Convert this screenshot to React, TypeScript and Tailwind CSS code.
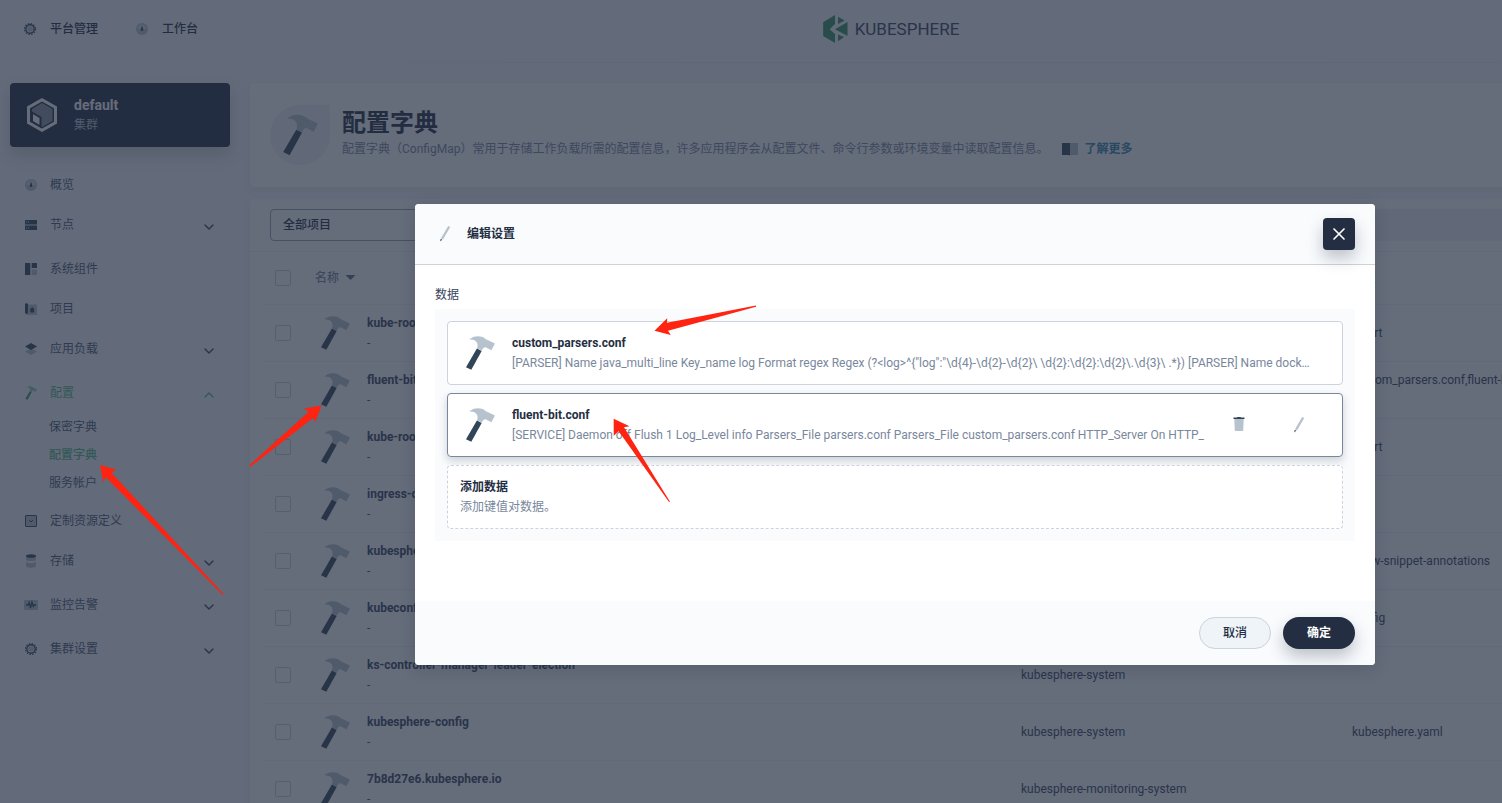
import type { ReactNode } from 'react'
import { ChevronDown, ChevronUp, X } from 'lucide-react'
import { clsx } from 'clsx'

interface NavItem {
  label: string
  icon: ReactNode
  expandable?: boolean
  active?: boolean
  children?: { label: string; active?: boolean }[]
}

interface ConfigMapRow {
  name: string
  project: string
  fields: string
  tall?: boolean
}

const NAV_ITEMS: NavItem[] = [
  { label: '概览', icon: <GaugeIcon /> },
  { label: '节点', icon: <NodesIcon />, expandable: true },
  { label: '系统组件', icon: <ComponentsIcon /> },
  { label: '项目', icon: <ProjectIcon /> },
  { label: '应用负载', icon: <LayersIcon />, expandable: true },
  {
    label: '配置',
    icon: <HammerIcon className="h-4 w-4" head="#8fd0b1" handle="#369a6a" />,
    expandable: true,
    active: true,
    children: [
      { label: '保密字典' },
      { label: '配置字典', active: true },
      { label: '服务帐户' },
    ],
  },
  { label: '定制资源定义', icon: <CrdIcon /> },
  { label: '存储', icon: <StorageIcon />, expandable: true },
  { label: '监控告警', icon: <MonitorIcon />, expandable: true },
  { label: '集群设置', icon: <GearIcon />, expandable: true },
]

const ROWS: ConfigMapRow[] = [
  { name: 'kube-root-ca.crt', project: 'kubesphere-logging', fields: 'ca.crt' },
  {
    name: 'fluent-bit',
    project: 'kubesphere-logging',
    fields: 'custom_parsers.conf,fluent-bit.conf',
    tall: true,
  },
  { name: 'kube-root-ca.crt', project: 'kubesphere-system', fields: 'ca.crt' },
  { name: 'ingress-controller', project: 'kubesphere-system', fields: '' },
  { name: 'kubesphere-router', project: 'kubesphere-system', fields: 'allow-snippet-annotations' },
  { name: 'kubeconfig-admin', project: 'kubesphere-system', fields: 'config' },
  { name: 'ks-controller-manager-leader-election', project: 'kubesphere-system', fields: '' },
  { name: 'kubesphere-config', project: 'kubesphere-system', fields: 'kubesphere.yaml' },
  { name: '7b8d27e6.kubesphere.io', project: 'kubesphere-monitoring-system', fields: '' },
]

const ENTRIES = [
  {
    key: 'custom_parsers.conf',
    value:
      '[PARSER] Name java_multi_line Key_name log Format regex Regex (?<log>^{"log":"\\d{4}-\\d{2}-\\d{2}\\ \\d{2}:\\d{2}:\\d{2}\\.\\d{3}\\ .*}) [PARSER] Name dock…',
  },
  {
    key: 'fluent-bit.conf',
    value:
      '[SERVICE] Daemon off Flush 1 Log_Level info Parsers_File parsers.conf Parsers_File custom_parsers.conf HTTP_Server On HTTP_',
    selected: true,
  },
]

export default function App() {
  return (
    <div className="relative h-screen overflow-hidden bg-[#f7f8fb] font-[Roboto,'Noto_Sans_CJK_SC',sans-serif] text-xs text-[#242e42]">
      {/* Console is laid out for wide screens, narrower windows cut the right side */}
      <div className="relative h-full min-w-[1790px] overflow-hidden">
        <TopBar />
        <div className="flex">
          <Sidebar />
          <main className="min-w-0 flex-1 space-y-3 pt-5 pr-5">
            <PageBanner />
            <ConfigMapTable />
          </main>
        </div>

        <div className="absolute inset-0 flex items-start justify-center bg-[#232d41]/70 pt-[204px]">
          <EditDialog />
        </div>
        <Annotations />
      </div>
    </div>
  )
}

function TopBar() {
  return (
    <header className="flex h-[63px] flex-col justify-between">
      <div className="grid h-[58px] grid-cols-[1fr_auto_1fr] items-center pr-2">
        <nav className="flex items-center gap-9 pl-[22px] font-medium">
          <a href="#platform" className="flex items-center gap-3">
            <GearIcon />
            平台管理
          </a>
          <a href="#workbench" className="flex items-center gap-3">
            <GaugeIcon />
            工作台
          </a>
        </nav>
        <div className="flex items-center gap-[7px]">
          <svg viewBox="0 0 75 85" className="h-7 w-[25px]" fill="#329361">
            <path d="M36 0V27L20 43L36 58V85L0 64V22Z" />
            <path d="M45 5L65 17L45 27Z" />
            <path d="M74 21V64L36 43Z" />
            <path d="M45 59L64 67L45 80Z" />
          </svg>
          <span className="text-[17px] leading-7 text-[#36435c]">KUBESPHERE</span>
        </div>
      </div>
      <div className="ml-[220px] h-px bg-gradient-to-r from-[#f7f8fb] via-[#e3e9ef] to-[#f7f8fb]" />
    </header>
  )
}

function Sidebar() {
  return (
    <aside className="w-[250px] shrink-0 px-[10px] pt-5">
      <div className="mr-[10px] flex h-16 items-center gap-4 rounded bg-[#242e42] pl-4 text-white shadow-[0_8px_16px_rgba(36,46,66,0.2)]">
        <ClusterIcon />
        <div className="leading-5">
          <p className="text-sm leading-5 font-bold">default</p>
          <p className="text-[#b6c2cd]">集群</p>
        </div>
      </div>

      <ul className="mt-[18px] text-[#4a5974]">
        {NAV_ITEMS.map((item) => (
          <li
            key={item.label}
            className={clsx(item.expandable && !item.children && 'pb-1', item.active && 'text-[#55bc8a]')}
          >
            <a href="#nav" className="flex h-10 items-center gap-[11px] pr-[23px] pl-[13px]">
              {item.icon}
              <span className="flex-1">{item.label}</span>
              {item.expandable &&
                (item.active ? (
                  <ChevronUp className="mt-1 h-4 w-4" strokeWidth={2} />
                ) : (
                  <ChevronDown className="mt-1 h-4 w-4 text-[#36435c]" strokeWidth={2} />
                ))}
            </a>
            {item.children && (
              <ul className="pb-1">
                {item.children.map((child) => (
                  <li key={child.label}>
                    <a
                      href="#nav"
                      className={clsx(
                        'flex h-7 items-center pl-[39px]',
                        child.active ? 'font-medium text-[#55bc8a]' : 'text-[#4a5974]',
                      )}
                    >
                      {child.label}
                    </a>
                  </li>
                ))}
              </ul>
            )}
          </li>
        ))}
      </ul>
    </aside>
  )
}

function PageBanner() {
  return (
    <section className="flex h-[104px] items-start gap-3 rounded bg-white px-5 pt-[22px] shadow-[0_4px_8px_rgba(36,46,66,0.06)]">
      <div className="flex h-15 w-15 items-center justify-center rounded-full rounded-tr-none bg-[#f0f2f8]">
        <HammerIcon className="h-12 w-12" />
      </div>
      <div>
        <h1 className="text-2xl leading-9 font-bold">配置字典</h1>
        <p className="flex items-center leading-4 text-[#79879c]">
          配置字典（ConfigMap）常用于存储工作负载所需的配置信息，许多应用程序会从配置文件、命令行参数或环境变量中读取配置信息。
          <a href="#docs" className="ml-3 flex items-center gap-1 font-bold text-[#3385b0]">
            <BookIcon />
            了解更多
          </a>
        </p>
      </div>
    </section>
  )
}

function Checkbox({ label }: { label: string }) {
  return (
    <input
      type="checkbox"
      aria-label={label}
      className="block h-4 w-4 appearance-none rounded-xs border border-[#ccd3db]"
    />
  )
}

function ConfigMapTable() {
  return (
    <section className="rounded bg-white shadow-[0_4px_8px_rgba(36,46,66,0.06)]">
      <div className="flex gap-3 border-b border-[#f0f2f8] px-5 py-[10px]">
        <select
          aria-label="项目"
          className="h-8 w-[200px] appearance-none rounded border border-[#98a3b4] bg-white px-3 font-medium"
        >
          <option>全部项目</option>
        </select>
        <input
          type="search"
          aria-label="搜索"
          className="h-8 flex-1 rounded bg-[#f0f2f8] px-3 outline-none"
        />
      </div>
      <div className="px-3">
        <table className="w-full table-fixed text-left">
          <thead>
            <tr className="h-[52px] border-b border-[#f0f2f8] text-[#79879c]">
              <th className="w-[41px] pl-[13px]">
                <Checkbox label="全选" />
              </th>
              <th className="w-[706px] pl-3 font-medium">
                <span className="flex items-center gap-[6px]">
                  名称
                  <svg viewBox="0 0 12 6" className="h-[5px] w-[11px]" fill="#5f708a">
                    <path d="M0 0H12L6 6Z" />
                  </svg>
                </span>
              </th>
              <th className="w-[331px] pl-3 font-medium">项目</th>
              <th className="pl-3 font-medium">配置</th>
            </tr>
          </thead>
          <tbody>
            {ROWS.map((row, i) => (
              <tr key={i} className="h-[57px] border-b border-[#f0f2f8]">
                <td className="pl-[13px]">
                  <Checkbox label={row.name} />
                </td>
                <td className="pl-3">
                  <div className="flex items-center gap-3">
                    <HammerIcon className="h-10 w-10" />
                    <div className="leading-5">
                      <a href="#configmap" className="block font-bold text-[#36435c]">
                        {row.name}
                      </a>
                      <p className="text-[#4a5974]">-</p>
                    </div>
                  </div>
                </td>
                <td className="pl-3 text-[#36435c]">{row.project}</td>
                <td className={clsx('pl-3 whitespace-nowrap text-[#36435c]', row.tall && 'pb-5')}>
                  {row.fields}
                </td>
              </tr>
            ))}
          </tbody>
        </table>
      </div>
    </section>
  )
}

function EditDialog() {
  return (
    <div
      role="dialog"
      aria-labelledby="edit-title"
      className="w-[960px] overflow-hidden rounded bg-white shadow-[0_4px_16px_rgba(36,46,66,0.2)]"
    >
      <div className="flex h-[61px] items-center gap-3 border-b border-[#ccd3db] bg-[#f9fbfd] px-5">
        <PencilIcon className="h-5 w-5" />
        <h2 id="edit-title" className="flex-1 font-bold">
          编辑设置
        </h2>
        <button
          aria-label="关闭"
          className="flex h-8 w-8 items-center justify-center rounded bg-[#242e42] text-white shadow-[0_8px_16px_rgba(36,46,66,0.28)]"
        >
          <X className="h-5 w-5" strokeWidth={2} />
        </button>
      </div>

      <div className="px-5 pt-5 pb-15">
        <p className="mb-1 leading-5 text-[#36435c]">数据</p>
        <ul className="space-y-2 bg-[#f9fbfd] p-3">
          {ENTRIES.map((entry) => (
            <li
              key={entry.key}
              className={clsx(
                'flex h-16 items-center gap-3 rounded border bg-white px-3',
                entry.selected
                  ? 'border-[#79879c] shadow-[0_4px_8px_rgba(36,46,66,0.2)]'
                  : 'border-[#ccd3db]',
              )}
            >
              <HammerIcon className="h-10 w-10 shrink-0" />
              <div className="min-w-0 flex-1 leading-5 whitespace-nowrap">
                <p className="font-bold">{entry.key}</p>
                <p className="text-[#79879c]">{entry.value}</p>
              </div>
              {entry.selected && (
                <div className="mr-[21px] flex gap-10">
                  <button aria-label="删除" className="h-5 w-5">
                    <TrashIcon />
                  </button>
                  <button aria-label="编辑" className="h-5 w-5">
                    <PencilIcon className="h-5 w-5" />
                  </button>
                </div>
              )}
            </li>
          ))}
          <li>
            <button className="block h-16 w-full rounded border border-dashed border-[#ccd3db] bg-white px-3 text-left leading-5">
              <span className="block font-bold">添加数据</span>
              <span className="block text-[#79879c]">添加键值对数据。</span>
            </button>
          </li>
        </ul>
      </div>

      <div className="flex justify-end gap-3 bg-[#f9fbfd] px-5 py-4">
        <button className="h-8 w-18 rounded-full border border-[#ccd3db] bg-[#eff4f9] font-medium">
          取消
        </button>
        <button className="h-8 w-18 rounded-full bg-[#242e42] font-bold text-white shadow-[0_8px_16px_rgba(36,46,66,0.28)]">
          确定
        </button>
      </div>
    </div>
  )
}

/* Red pointers drawn over the page */
function Annotations() {
  return (
    <svg
      className="pointer-events-none absolute top-0 left-0 h-[803px] w-[1502px]"
      viewBox="0 0 1502 803"
      fill="#ff2312"
    >
      <path d="M100 465L116.5 469.7L111.5 472.7L223.8 594.3L222.8 595L105.8 477.3L103.3 482Z" />
      <path d="M321.5 405.5L303.3 408.7L309 411.5L249.3 465.3L250 467L313.3 417.8L315.3 422Z" />
      <path d="M654.5 330.7L667.2 318.2L667 322.7L756 305.5V306.7L668 330.8L670.8 335Z" />
      <path d="M613.7 418.8L629.5 426.3L624 427.3L670 501.7L669 502L618.7 431.3L613.7 435.8Z" />
    </svg>
  )
}

function HammerIcon({
  className,
  head = '#b6c2cd',
  handle = '#324558',
}: {
  className?: string
  head?: string
  handle?: string
}) {
  return (
    <svg viewBox="0 0 40 40" className={className}>
      <path
        fill={head}
        d="M9.3 6.6C13 2.5 21 2 25 5.5C26 6.5 27 6.8 28 7.2L34.9 10.4L31.4 17.2L26 14.4C24.5 13.8 23 14.8 21.7 17.6L17 15.3C19 10.5 16 5.6 9.3 6.6Z"
      />
      <path fill={handle} d="M16.9 15.6L21.7 18L11.3 36.8L6 34.2Z" />
    </svg>
  )
}

function PencilIcon({ className }: { className?: string }) {
  return (
    <svg viewBox="0 0 20 20" className={className}>
      <path fill="#b6c2cd" d="M13.2 2L15.2 3L8 15.4L6 14.2Z" />
      <path fill="#324558" d="M5.7 14.8L7.2 15.7L5.2 17.6Z" />
    </svg>
  )
}

function TrashIcon() {
  return (
    <svg viewBox="0 0 20 20" className="h-5 w-5">
      <path fill="#b6c2cd" d="M5.3 4H14.7L14.2 15.4L13.6 16H6.4L5.8 15.4Z" />
      <path fill="#324558" d="M4.5 2.6H8L8.4 2H11.6L12 2.6H15.5V4H4.5Z" />
    </svg>
  )
}

function GearIcon() {
  return (
    <svg viewBox="0 0 16 16" className="h-4 w-4" fill="none" stroke="#324558">
      <circle cx="8" cy="8" r="2.8" fill="#b6c2cd" stroke="none" />
      <circle cx="8" cy="8" r="4.2" strokeWidth="1.4" />
      <circle cx="8" cy="8" r="5.5" strokeWidth="1.2" strokeDasharray="1.4 1.48" />
    </svg>
  )
}

function GaugeIcon() {
  return (
    <svg viewBox="0 0 16 16" className="h-4 w-4">
      <circle cx="8" cy="8" r="6" fill="#b6c2cd" />
      <path d="M3.5 8A4.5 4.5 0 0 1 12.5 8Z" fill="#d5dde4" />
      <path d="M8 4.5L9.2 8.3A1.3 1.3 0 1 1 6.8 8.3Z" fill="#324558" />
    </svg>
  )
}

function NodesIcon() {
  return (
    <svg viewBox="0 0 16 16" className="h-4 w-4">
      <path d="M2 3H14V7.4H2ZM2 8.6H14V13H2Z" fill="#324558" />
      <path d="M3 4.5H4V5.5H3ZM5 4.5H6V5.5H5ZM3 10.5H4V11.5H3ZM5 10.5H6V11.5H5Z" fill="#d5dde4" />
    </svg>
  )
}

function ComponentsIcon() {
  return (
    <svg viewBox="0 0 16 16" className="h-4 w-4">
      <path d="M2 2H7.3V14H2ZM8.7 2H14V7H8.7Z" fill="#324558" />
      <path d="M8.7 8.5H14V14H8.7Z" fill="#b6c2cd" />
    </svg>
  )
}

function ProjectIcon() {
  return (
    <svg viewBox="0 0 16 16" className="h-4 w-4">
      <path d="M5 3.5H14V14H3V12H5Z" fill="#b6c2cd" />
      <path d="M2 3L3.5 2L5 3V12.5H2ZM7.2 11.5V8L9.2 6L11.2 8V11.5Z" fill="#324558" />
    </svg>
  )
}

function LayersIcon() {
  return (
    <svg viewBox="0 0 16 16" className="h-4 w-4">
      <path d="M2 10.5L8 7.5L14 10.5L8 14Z" fill="#b6c2cd" />
      <path d="M2 5.5L8 2L14 5.5L8 9Z" fill="#324558" />
    </svg>
  )
}

function CrdIcon() {
  return (
    <svg viewBox="0 0 16 16" className="h-4 w-4" stroke="#324558">
      <rect x="2.5" y="2.5" width="11" height="11" rx="0.5" fill="#b6c2cd" />
      <path d="M6 7.2L8 9L10 7.2" fill="none" />
    </svg>
  )
}

function StorageIcon() {
  return (
    <svg viewBox="0 0 16 16" className="h-4 w-4">
      <path d="M3 3V6.5C3 8.5 13 8.5 13 6.5V3ZM3 9V13C3 15.3 13 15.3 13 13V9C11 10.5 5 10.5 3 9Z" fill="#b6c2cd" />
      <ellipse cx="8" cy="3" rx="5" ry="1.8" fill="#324558" />
    </svg>
  )
}

function MonitorIcon() {
  return (
    <svg viewBox="0 0 16 16" className="h-4 w-4">
      <rect x="1" y="3" width="14" height="10" rx="1" fill="#b6c2cd" />
      <path d="M3 8H5L6.2 5.5L7.5 11L9 5L10.3 9.5L11.2 8H13" fill="none" stroke="#324558" strokeWidth="1.3" />
    </svg>
  )
}

function BookIcon() {
  return (
    <svg viewBox="0 0 20 16" className="h-4 w-5">
      <path d="M2 2H10V14.5L8.5 14H2Z" fill="#324558" />
      <path d="M10 2H18V14H11.5L10 14.5Z" fill="#b6c2cd" />
    </svg>
  )
}

function ClusterIcon() {
  return (
    <svg viewBox="0 0 32 34" className="h-[34px] w-8">
      <path
        fill="#fff"
        fillRule="evenodd"
        d="M16 0L31 8.5V25.5L16 34L1 25.5V8.5ZM16 3.6L4 10.3V23.7L16 30.4L28 23.7V10.3Z"
      />
      <path fill="#8893a5" d="M16 5L26.5 11V23L16 29L6 23V11Z" />
      <path fill="#fff" stroke="#242e42" strokeWidth="2" d="M6 14.5L14.5 19.5V28.5L6 23.5Z" />
    </svg>
  )
}
